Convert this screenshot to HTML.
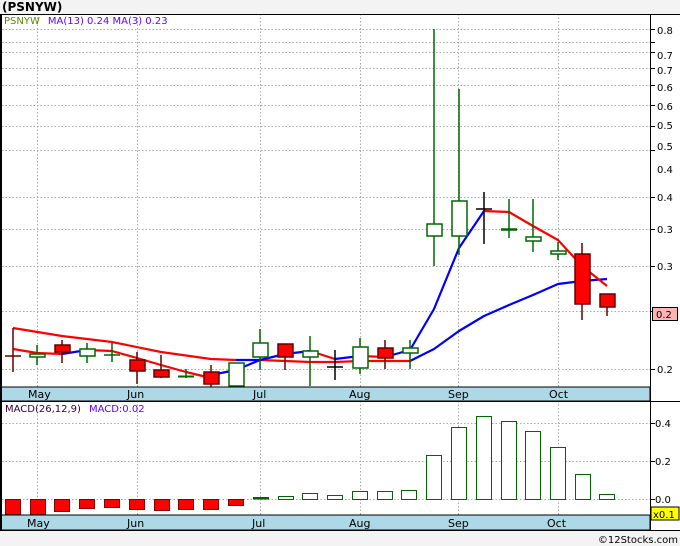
<!DOCTYPE html>
<html><head><meta charset="utf-8"><style>
body{margin:0;background:#f3f3f3;width:680px;height:546px;overflow:hidden}
svg{display:block;font-family:"DejaVu Sans","Liberation Sans",sans-serif}
</style></head><body>
<svg width="680" height="546" viewBox="0 0 680 546">
<rect x="0" y="0" width="680" height="546" fill="#f3f3f3"/>
<text x="2" y="11" font-size="12" font-weight="bold" fill="#000">(PSNYW)</text>
<rect x="0" y="14" width="680" height="517" fill="#fff"/>
<g stroke="#aaa" stroke-dasharray="1.5,2" stroke-width="1">
<line x1="2" x2="650" y1="29.5" y2="29.5"/><line x1="2" x2="650" y1="42.5" y2="42.5"/><line x1="2" x2="650" y1="52.5" y2="52.5"/><line x1="2" x2="650" y1="68.5" y2="68.5"/><line x1="2" x2="650" y1="85.5" y2="85.5"/><line x1="2" x2="650" y1="105.5" y2="105.5"/><line x1="2" x2="650" y1="126.5" y2="126.5"/><line x1="2" x2="650" y1="150.5" y2="150.5"/><line x1="2" x2="650" y1="197.5" y2="197.5"/><line x1="2" x2="650" y1="229.5" y2="229.5"/><line x1="2" x2="650" y1="266.5" y2="266.5"/><line x1="2" x2="650" y1="311.5" y2="311.5"/><line x1="2" x2="650" y1="369.5" y2="369.5"/>
<line x1="2" x2="650" y1="423.5" y2="423.5"/><line x1="2" x2="650" y1="461.5" y2="461.5"/><line x1="2" x2="650" y1="499.5" y2="499.5"/>
<line x1="37.5" x2="37.5" y1="14" y2="387"/><line x1="137.5" x2="137.5" y1="14" y2="387"/><line x1="260.5" x2="260.5" y1="14" y2="387"/><line x1="360.5" x2="360.5" y1="14" y2="387"/><line x1="458.5" x2="458.5" y1="14" y2="387"/><line x1="558.5" x2="558.5" y1="14" y2="387"/>
<line x1="37.5" x2="37.5" y1="401" y2="515"/><line x1="137.5" x2="137.5" y1="401" y2="515"/><line x1="260.5" x2="260.5" y1="401" y2="515"/><line x1="360.5" x2="360.5" y1="401" y2="515"/><line x1="458.5" x2="458.5" y1="401" y2="515"/><line x1="558.5" x2="558.5" y1="401" y2="515"/>
</g>
<text x="4" y="24" font-size="10" fill="#080"><tspan fill="#5a8a00">PSNYW</tspan><tspan fill="#60f" dx="8">MA(13)  0.24  MA(3)  0.23</tspan></text>
<g fill="none" stroke-width="2.2" stroke-linejoin="round">
<polyline stroke="#f00" points="13,328 62,336 112,342 161,352 211,359 236,360"/>
<polyline stroke="#00f" points="236,360 260,360"/>
<polyline stroke="#f00" points="260,360 285,361 310,362 335,362 360,361 385,361 410,361"/>
<polyline stroke="#00f" points="410,361 434,349 459,331 484,316 509,305 533,295 558,284 582,281 607,279"/>
<polyline stroke="#f00" points="13,349 37,353 62,354"/>
<polyline stroke="#00f" points="62,354 87,350"/>
<polyline stroke="#f00" points="87,350 112,351 137,358 161,365 186,372 211,378"/>
<polyline stroke="#00f" points="211,375 236,370 260,360 285,354 310,351"/>
<polyline stroke="#f00" points="310,351 335,359"/>
<polyline stroke="#00f" points="335,359 360,356"/>
<polyline stroke="#f00" points="360,356 385,357"/>
<polyline stroke="#00f" points="385,357 410,350 434,309 459,248 484,211"/>
<polyline stroke="#f00" points="484,211 509,212 533,226 558,240 582,266 607,286"/>
</g>
<g stroke-width="1.5">
<g stroke="#600"><line x1="13" x2="13" y1="328" y2="372"/><line x1="5" x2="21" y1="356" y2="356"/></g>
<g stroke="#060"><line x1="37" x2="37" y1="345" y2="365"/><rect x="30" y="354" width="15" height="3" fill="#fff"/></g>
<g stroke="#600"><line x1="62" x2="62" y1="340" y2="363"/><rect x="55" y="345" width="15" height="7" fill="#f00"/></g>
<g stroke="#060"><line x1="87" x2="87" y1="343" y2="363"/><rect x="80" y="349" width="15" height="7" fill="#fff"/></g>
<g stroke="#060"><line x1="112" x2="112" y1="343" y2="362"/><line x1="104" x2="120" y1="355" y2="355"/></g>
<g stroke="#600"><line x1="137" x2="137" y1="352" y2="384"/><rect x="130" y="360" width="15" height="11" fill="#f00"/></g>
<g stroke="#600"><line x1="161" x2="161" y1="355" y2="378"/><rect x="154" y="370" width="15" height="7" fill="#f00"/></g>
<g stroke="#060"><line x1="186" x2="186" y1="369" y2="378"/><line x1="178" x2="194" y1="376.5" y2="376.5" stroke-width="2"/></g>
<g stroke="#600"><line x1="211" x2="211" y1="365" y2="387"/><rect x="204" y="372" width="15" height="12" fill="#f00"/></g>
<g stroke="#060"><rect x="229" y="363" width="15" height="23" fill="#fff"/></g>
<g stroke="#060"><line x1="260" x2="260" y1="329" y2="370"/><rect x="253" y="343" width="15" height="14" fill="#fff"/></g>
<g stroke="#600"><line x1="285" x2="285" y1="344" y2="370"/><rect x="278" y="344" width="15" height="13" fill="#f00"/></g>
<g stroke="#060"><line x1="310" x2="310" y1="336" y2="386"/><rect x="303" y="351" width="15" height="6" fill="#fff"/></g>
<g stroke="#000"><line x1="335" x2="335" y1="350" y2="380"/><line x1="327" x2="343" y1="367" y2="367"/></g>
<g stroke="#060"><line x1="360" x2="360" y1="338" y2="374"/><rect x="353" y="347" width="15" height="21" fill="#fff"/></g>
<g stroke="#600"><line x1="385" x2="385" y1="340" y2="369"/><rect x="378" y="348" width="15" height="10" fill="#f00"/></g>
<g stroke="#060"><line x1="410" x2="410" y1="340" y2="369"/><rect x="403" y="348" width="15" height="5" fill="#fff"/></g>
<g stroke="#060"><line x1="434" x2="434" y1="29" y2="266"/><rect x="427" y="224" width="15" height="12" fill="#fff"/></g>
<g stroke="#060"><line x1="459" x2="459" y1="89" y2="255"/><rect x="452" y="201" width="15" height="35" fill="#fff"/></g>
<g stroke="#000"><line x1="484" x2="484" y1="192" y2="244"/><line x1="476" x2="492" y1="209" y2="209"/></g>
<g stroke="#060"><line x1="509" x2="509" y1="199" y2="238"/><line x1="501" x2="517" y1="229.5" y2="229.5" stroke-width="2.5"/></g>
<g stroke="#060"><line x1="533" x2="533" y1="199" y2="252"/><rect x="526" y="237" width="15" height="4" fill="#fff"/></g>
<g stroke="#060"><line x1="558" x2="558" y1="242" y2="260"/><rect x="551" y="251" width="15" height="3" fill="#fff"/></g>
<g stroke="#600"><line x1="582" x2="582" y1="243" y2="320"/><rect x="575" y="254" width="15" height="50" fill="#f00"/></g>
<g stroke="#600"><line x1="607" x2="607" y1="294" y2="316"/><rect x="600" y="294" width="15" height="13" fill="#f00"/></g>
</g>
<rect x="1" y="387" width="649" height="14" fill="#add8e6" stroke="#000"/>
<g font-size="11" fill="#000">
<text x="28" y="398">May</text><text x="127" y="398">Jun</text><text x="253" y="398">Jul</text><text x="349" y="398">Aug</text><text x="448" y="398">Sep</text><text x="549" y="398">Oct</text>
</g>
<text x="5" y="412" font-size="10" fill="#303"><tspan>MACD(26,12,9)</tspan><tspan fill="#60f" dx="8">MACD:0.02</tspan></text>
<g stroke="#800" fill="#f00" stroke-width="1">
<rect x="5.5" y="499.5" width="15" height="15"/><rect x="30.5" y="499.5" width="15" height="15"/><rect x="54.5" y="499.5" width="15" height="12"/><rect x="79.5" y="499.5" width="15" height="9"/><rect x="104.5" y="499.5" width="15" height="8"/><rect x="129.5" y="499.5" width="15" height="10"/><rect x="154.5" y="499.5" width="15" height="11"/><rect x="178.5" y="499.5" width="15" height="10"/><rect x="203.5" y="499.5" width="15" height="10"/><rect x="228.5" y="499.5" width="15" height="6"/>
</g>
<g stroke="#060" fill="#fff" stroke-width="1">
<rect x="253.5" y="497.5" width="15" height="1.5" fill="#060"/><rect x="278.5" y="496.5" width="15" height="3"/><rect x="302.5" y="493.5" width="15" height="6"/><rect x="327.5" y="495.5" width="15" height="4"/><rect x="352.5" y="491.5" width="15" height="8"/><rect x="377.5" y="491.5" width="15" height="8"/><rect x="401.5" y="490.5" width="15" height="9"/><rect x="426.5" y="455.5" width="15" height="44"/><rect x="451.5" y="427.5" width="15" height="72"/><rect x="476.5" y="416.5" width="15" height="83"/><rect x="501.5" y="421.5" width="15" height="78"/><rect x="525.5" y="431.5" width="15" height="68"/><rect x="550.5" y="447.5" width="15" height="52"/><rect x="575.5" y="474.5" width="15" height="25"/><rect x="599.5" y="494.5" width="15" height="5"/>
</g>
<rect x="1" y="515" width="649" height="15" fill="#add8e6" stroke="#000"/>
<g font-size="11" fill="#000">
<text x="27" y="527">May</text><text x="127" y="527">Jun</text><text x="252" y="527">Jul</text><text x="349" y="527">Aug</text><text x="448" y="527">Sep</text><text x="547" y="527">Oct</text>
</g>
<line x1="1" x2="1" y1="14" y2="531" stroke="#000" stroke-width="2"/>
<line x1="0" x2="680" y1="14.5" y2="14.5" stroke="#000"/>
<line x1="0" x2="680" y1="401.5" y2="401.5" stroke="#000"/>
<line x1="650.5" x2="650.5" y1="14" y2="531" stroke="#000"/>
<line x1="0" x2="680" y1="530.5" y2="530.5" stroke="#000"/>
<g stroke="#000">
<line x1="650" x2="655" y1="29.5" y2="29.5"/><line x1="650" x2="655" y1="42.5" y2="42.5"/><line x1="650" x2="655" y1="52.5" y2="52.5"/><line x1="650" x2="655" y1="68.5" y2="68.5"/><line x1="650" x2="655" y1="85.5" y2="85.5"/><line x1="650" x2="655" y1="105.5" y2="105.5"/><line x1="650" x2="655" y1="126.5" y2="126.5"/><line x1="650" x2="655" y1="150.5" y2="150.5"/><line x1="650" x2="655" y1="197.5" y2="197.5"/><line x1="650" x2="655" y1="229.5" y2="229.5"/><line x1="650" x2="655" y1="266.5" y2="266.5"/><line x1="650" x2="655" y1="311.5" y2="311.5"/><line x1="650" x2="655" y1="369.5" y2="369.5"/>
<line x1="650" x2="655" y1="423.5" y2="423.5"/><line x1="650" x2="655" y1="461.5" y2="461.5"/><line x1="650" x2="655" y1="499.5" y2="499.5"/>
</g>
<g font-size="10" fill="#000">
<text x="657" y="34">0.8</text><text x="657" y="59">0.7</text><text x="657" y="74">0.7</text><text x="657" y="91">0.6</text><text x="657" y="110">0.6</text><text x="657" y="129">0.5</text><text x="657" y="150">0.5</text><text x="657" y="173">0.4</text><text x="657" y="201">0.4</text><text x="657" y="233">0.3</text><text x="657" y="270">0.3</text><text x="657" y="373">0.2</text>
<text x="655" y="427">0.4</text><text x="655" y="465">0.2</text><text x="655" y="503">0.0</text>
</g>
<rect x="652.5" y="307.5" width="25" height="13" fill="#ffb4b4" stroke="#000"/>
<text x="656" y="318" font-size="10" fill="#000">0.2</text>
<rect x="651" y="507" width="28" height="13" fill="#ff0" stroke="#000"/>
<text x="653" y="518" font-size="10" fill="#000">x0.1</text>
<text x="678" y="543" font-size="10" fill="#000" text-anchor="end">©12Stocks.com</text>
</svg>
</body></html>
